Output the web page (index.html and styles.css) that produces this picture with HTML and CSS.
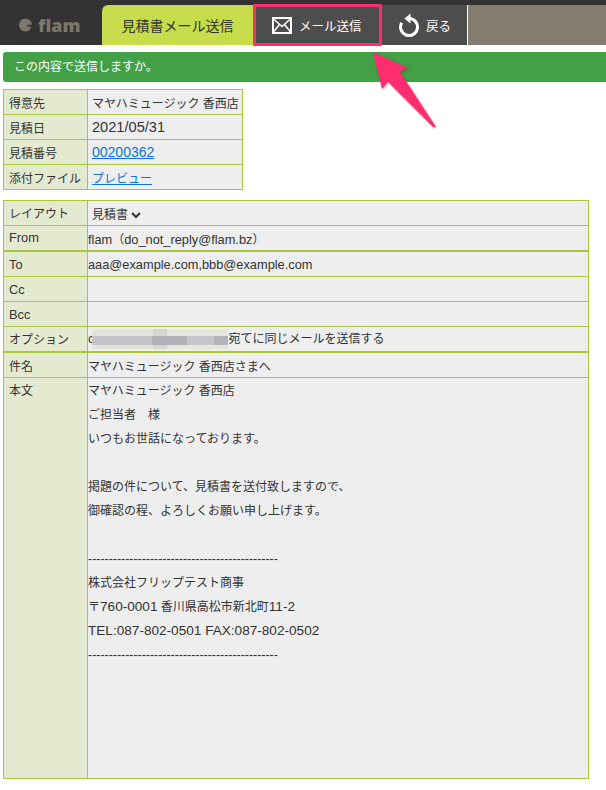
FILE: index.html
```html
<!doctype html>
<html lang="ja">
  <head>
    <meta charset="utf-8">
    <meta name="viewport" content="width=device-width, initial-scale=1">
    <title>見積書メール送信</title>
    <link rel="stylesheet" href="styles.css">
  </head>
  <body>

  <div class="header">
    <div class="logo">
      <svg class="logo-mark" width="14" height="14" viewBox="0 0 14 14"><circle cx="6.500" cy="7" r="6.500" fill="#7d766a"/><path d="M7.500 7.500L14 4.500V10z" fill="#333"/><circle cx="11.500" cy="6" r="1.300" fill="#7d766a"/></svg>
      <span>flam</span>
    </div>
    <div class="tab">見積書メール送信</div>
    <a class="btn btn-send">
      <svg width="20" height="17" viewBox="0 0 20 17"><rect x="1" y="1" width="18" height="15" fill="none" stroke="#fff" stroke-width="2"/><path d="M1 1.500l9 8 9-8M1 15.500l6.500-8M19 15.500l-6.500-8" fill="none" stroke="#fff" stroke-width="1.500"/></svg>
      <span>メール送信</span>
    </a>
    <a class="btn btn-back">
      <svg width="22" height="24" viewBox="0 0 22 24"><path d="M11 5.500a8.500 8.500 0 1 1-7.300 4.200" fill="none" stroke="#fff" stroke-width="3"/><path d="M6.500 5.500l6-5v10z" fill="#fff"/></svg>
      <span>戻る</span>
    </a>
    <div class="header-rest"></div>
  </div>

  <div class="notice">この内容で送信しますか。</div>

  <table class="info">
    <tr><th>得意先</th><td>マヤハミュージック 香西店</td></tr>
    <tr><th>見積日</th><td><span class="date">2021/05/31</span></td></tr>
    <tr><th>見積番号</th><td><a class="num" href="#">00200362</a></td></tr>
    <tr><th>添付ファイル</th><td><a href="#">プレビュー</a></td></tr>
  </table>

  <table class="mail">
    <tr class="lift"><th>レイアウト</th><td class="layout">見積書<svg class="chevron" width="10" height="7" viewBox="0 0 10 7"><path d="M1 1l4 4 4-4" fill="none" stroke="#333" stroke-width="2"/></svg></td></tr>
    <tr class="sep lift"><th class="latin">From</th><td><span class="latin">flam</span>（<span class="latin">do_not_reply@flam.bz</span>）</td></tr>
    <tr><th class="latin">To</th><td class="latin">aaa@example.com,bbb@example.com</td></tr>
    <tr><th class="latin">Cc</th><td></td></tr>
    <tr><th class="latin">Bcc</th><td></td></tr>
    <tr class="sep lift"><th>オプション</th><td><span class="latin">c</span><span class="mosaic"></span>宛てに同じメールを送信する</td></tr>
    <tr><th>件名</th><td>マヤハミュージック 香西店さまへ</td></tr>
    <tr class="body-row">
      <th>本文</th>
      <td>
        <div class="body-text">
          <div class="line">マヤハミュージック 香西店</div>
          <div class="line">ご担当者　様</div>
          <div class="line">いつもお世話になっております。</div>
          <div class="line"></div>
          <div class="line">掲題の件について、見積書を送付致しますので、</div>
          <div class="line">御確認の程、よろしくお願い申し上げます。</div>
          <div class="line"></div>
          <div class="line rule">----------------------------------------------</div>
          <div class="line">株式会社フリップテスト商事</div>
          <div class="line">〒<span class="num">760-0001</span> 香川県高松市新北町<span class="num">11-2</span></div>
          <div class="line num">TEL:087-802-0501 FAX:087-802-0502</div>
          <div class="line rule">----------------------------------------------</div>
        </div>
      </td>
    </tr>
  </table>

  <svg class="arrow" width="70" height="82" viewBox="0 0 70 82"><path fill="#ff2d6f" d="M2 0L37 16 29 20 65 75 62 75 17 30 11 37z"/></svg>

  </body>
</html>
```

FILE: styles.css
```css
body {
  margin: 0;
  background-color: #fff;
  font-family: "Liberation Sans", "Noto Sans CJK JP", sans-serif;
  font-size: 12px;
  color: #333;
  position: relative;
}

.header {
  display: flex;
  height: 40px;
  padding-top: 5px;
  background-color: #333;
}

.logo {
  width: 102px;
  display: flex;
  align-items: center;
  gap: 5px;
  padding-left: 19px;
  box-sizing: border-box;
  font-family: "Open Sans", sans-serif;
  font-weight: 800;
  font-size: 18px;
  color: #7d766a;
}

.tab {
  width: 151px;
  line-height: 42px;
  text-align: center;
  font-size: 14px;
  background-color: #c6dc4a;
  border-radius: 6px 0 0 0;
}

.btn {
  display: flex;
  align-items: center;
  height: 40px;
  box-sizing: border-box;
  background-color: #4d4d4d;
  color: #fff;
  font-size: 12.5px;
}

.btn-send {
  width: 130px;
  padding-left: 19px;
  gap: 7px;
  position: relative;
}

/* annotation around the send button */
.btn-send::after {
  content: "";
  position: absolute;
  left: 0;
  top: -1px;
  width: 123px;
  height: 36px;
  border: 3px solid #ff2d6f;
  border-radius: 1px;
}

.btn-back {
  width: 85px;
  padding-left: 15px;
  gap: 6px;
  border-right: 1px solid #fff;
}

.header-rest {
  flex: 1;
  background-color: #857d70;
}

.notice {
  margin: 7px 0 7px 3px;
  height: 30px;
  line-height: 30px;
  padding-left: 11px;
  background-color: #43a047;
  color: #fff;
  font-size: 12px;
  border-radius: 3px 0 0 3px;
}

table {
  border-collapse: collapse;
  margin-left: 3px;
  background-color: #eee;
}

th, td {
  border: 1px solid #a8c83a;
  padding: 0;
  height: 24px;
  font-weight: normal;
  text-align: left;
  font-size: 12px;
}

th {
  width: 78px;
  padding-left: 5px;
  background-color: #e3ead0;
  white-space: nowrap;
}

.latin {
  font-size: 12.8px;
}

.num {
  font-size: 13.6px;
}

.rule {
  font-size: 12.4px;
}

.date {
  font-size: 14.6px;
}

.info {
  width: 240px;
  margin-bottom: 10px;
}

.info td {
  padding-left: 4px;
  white-space: nowrap;
}

.info a {
  color: #0a74da;
}

.info .num {
  font-size: 14px;
}

.mail {
  width: 586px;
}

.mail .layout {
  padding-left: 4px;
}

.chevron {
  margin-left: 3px;
}

.sep th, .sep td {
  border-bottom-width: 2px;
}

.lift th {
  padding-bottom: 2px;
  box-sizing: border-box;
}

.mosaic {
  display: inline-block;
  width: 136px;
  margin-left: -2px;
  height: 20px;
  vertical-align: middle;
  background:
    linear-gradient(90deg, #c4c3ca 0 44%, #b2b1ba 44% 70%, #c6c5cc 70% 90%, #b4b3bc 90% 100%) 0 7px / 100% 9px no-repeat,
    linear-gradient(90deg, #e4e5da 0 45%, #d6d8cc 45% 55%, #e4e6da 55% 100%);
}

.body-row th, .body-row td {
  height: 400px;
  vertical-align: top;
}

.body-row th {
  padding-top: 3px;
  box-sizing: border-box;
}

.body-text {
  padding-top: 1px;
}

.line {
  height: 24px;
  line-height: 24px;
}

.arrow {
  position: absolute;
  left: 371px;
  top: 52px;
  filter: drop-shadow(1px 1px 1px rgba(0,0,0,0.3));
}
```
